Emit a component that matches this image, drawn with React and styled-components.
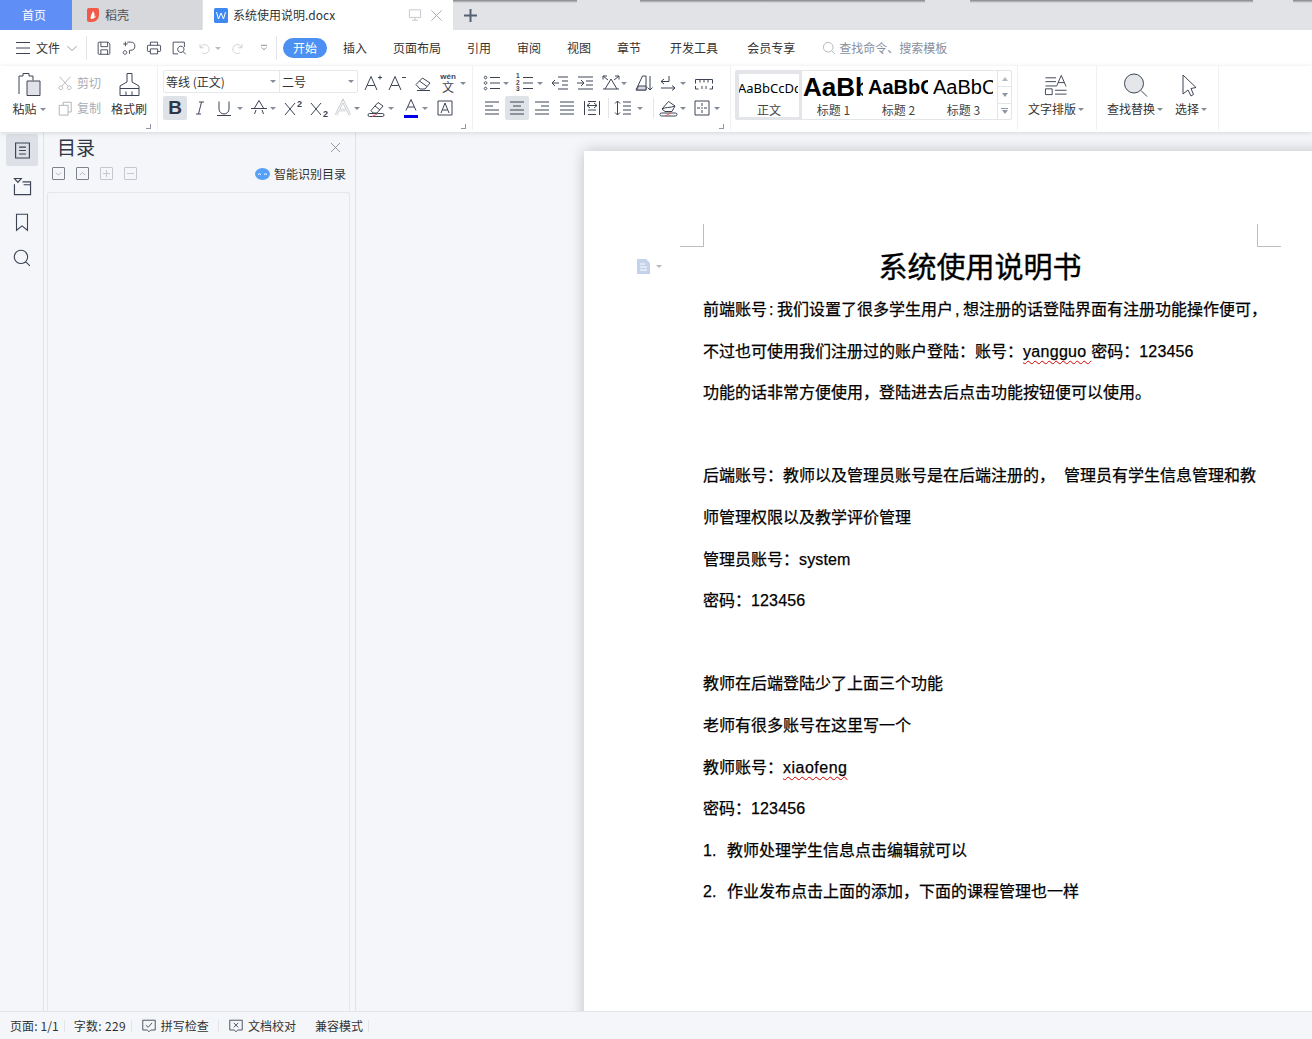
import React from "react";
import styled, { createGlobalStyle } from "styled-components";

const UI = `"Noto Sans CJK SC", "Liberation Sans", sans-serif`;
const INK = "#3c4454";

const Global = createGlobalStyle`
  html, body { margin: 0; padding: 0; height: 100%; overflow: hidden; background: #f4f6f9; }
  #root { height: 100%; }
  * { box-sizing: border-box; }
`;

const Shell = styled.div`
  height: 1039px; width: 1312px; display: flex; flex-direction: column; overflow: hidden;
  font: 12px/18px ${UI}; color: #333;
`;

/* ---------- icons ---------- */
const paths = {
  burger: <path d="M3 4.5h14M3 10h14M3 15.5h14" />,
  chev: <path d="M5 8l5 5 5-5" />,
  chevUp: <path d="M5 13l5-5 5 5" />,
  save: <path d="M4.5 3.5h10l2 2v10.5a1 1 0 0 1-1 1h-11a1 1 0 0 1-1-1v-11.5a1 1 0 0 1 1-1zM6.5 3.5v5h7.5v-5M6.5 17v-5h7.5v5" />,
  fmt: <path d="M3.5 5.5h5M6 3v5M8 3.5h4a4.5 4.5 0 0 1 0 9h-1.5M10.5 12.5v4M5.500 13a2 2 0 1 0 .1 0z" />,
  print: <path d="M6 7V3.5h8V7M3.5 7h13a.8.8 0 0 1 .8.8V13a.8.8 0 0 1-.8.8H14M6 13.8H3.5a.8.8 0 0 1-.8-.8V7.8a.8.8 0 0 1 .8-.8M6 11h8v5.5H6z" />,
  preview: <path d="M16 9V3.5H3.5v13H9M12 8a3.5 3.5 0 1 0 .1 0zM14.5 14l3 3" />,
  undo: <path d="M4 4v5h5M4.5 9a6 6 0 1 1 2 6.5" />,
  redo: <path d="M16 4v5h-5M15.5 9a6 6 0 1 0-2 6.5" />,
  more: <path d="M5 5.5h10M6 9l4 4 4-4" />,
  search: <path d="M9 3a6 6 0 1 0 .1 0zM13.2 13.2l4 4" />,
  paste: <><path d="M3 22V4h4V1.5h6V4h4v4.500" /><path d="M11 9h13v14.500H11z" fill="#e1e3e8" /></>,
  cut: <path d="M3 2l10 11M16 2L6 13M4.5 13a2.2 2.2 0 1 0 .1 0zM14.5 13a2.2 2.2 0 1 0 .1 0z" />,
  copy: <path d="M7 6V2.5h9v11h-3.5M2.5 6h10v11h-10z" />,
  brush: <><path d="M11 1.500h5v8.500l7 4v9.500H4V14l7-4zM4 16.500h19" /><path d="M10 19.500v4M16 19.500v4" /></>,
  aplus: <path d="M2 17L8 3.5 14 17M4.2 12.5h7.6M15 4.5h4M17 2.5v4" />,
  aminus: <path d="M2 17L8 3.5 14 17M4.2 12.5h7.6M15 4.5h4" />,
  eraser: <><path d="M3 11.5l6.5-6.5 7.5 5-5 6H7z" /><path d="M6.5 8l7.5 5.5" /><path d="M4 17.5h13" /></>,
  italic: <path d="M9 4h5M6 16h5M11.5 4l-3 12" />,
  under: <path d="M5 3.5V11a5 5 0 0 0 10 0V3.5M3 17.5h14" />,
  strikeA: <path d="M5.5 10L10 2.5 14.5 10M2 10.5h16M5.5 16l1.5-4M14.5 16l-1.5-4" />,
  sup: <path d="M3 5l10 12M13 5L3 17" />,
  glowA: <><path d="M3 17L10 3l7 14M6 12h8" stroke="#c4c7cd" strokeWidth="2.6" /><path d="M3 17L10 3l7 14M6 12h8" stroke="#fff" strokeWidth="1" /></>,
  pen: <><path d="M4 12.5l7-8 5 3.5-6 7H6z" /><path d="M8 8l5 4" /><path d="M2.5 15.5h13a1.5 1.5 0 0 1 0 3h-13a1.5 1.5 0 0 1 0-3z" /><path d="M5 18.5l6-3" stroke="#e25b5b" /></>,
  colorA: <path d="M5 12.5L10 1.5l5 11M6.8 9h6.4" />,
  boxA: <path d="M3 3h14v14H3zM6 15l4-10 4 10M7.4 12h5.2" />,
  bullets: <path d="M8 4.5h10M8 10h10M8 15.5h10M3.5 3.2a1.3 1.3 0 1 0 .1 0zM3.5 8.7a1.3 1.3 0 1 0 .1 0zM3.5 14.2a1.3 1.3 0 1 0 .1 0z" />,
  outdent: <path d="M8 4h10M12 8h6M12 12h6M8 16h10M9 10H2M5 7l-3 3 3 3" />,
  indent: <path d="M3 4h15M11 8h7M11 12h7M3 16h15M2 10h7M6 7l3 3-3 3" />,
  spread: <path d="M4 16l6-10 6 10M2 16h16M2 3l5 4M2 3h4M2 3v3.5M18 3l-5 4M18 3h-4M18 3v3.5" />,
  sortA: <><path d="M2 17L8.5 3h3.5v14z" /><path d="M2.5 17L4.5 13H12v4z" fill="#d4d7dc" /><path d="M16 3v14M13.5 14.5L16 17l2.5-2.5" /></>,
  para: <path d="M11 3v5.500H3M6 6L3 8.500l3 2.500M3 15h14M14 12.500l3 2.500-3 2.500" />,
  ruler: <path d="M1.5 6.5h17M1.5 6.5v4M6 6.5v3M10 6.5v3M14 6.5v3M18.5 6.5v4M1.5 13v3h3M8 13v3M12 13v3M15.5 16h3v-3" />,
  left: <path d="M3 4h14M3 8h8M3 12h14M3 16h14" />,
  center: <path d="M3 4h14M6 8h8M3 12h14M3 16h14" />,
  right: <path d="M3 4h14M9 8h8M3 12h14M3 16h14" />,
  just: <path d="M3 4h14M3 8h14M3 12h14M3 16h14" />,
  dist: <path d="M2.5 3v14M17.5 3v14M6 3.5h8M6 12h8M6 16.5h8M5 7.5h10M8 5l-3 2.5L8 10M12 5l3 2.5-3 2.5" />,
  spacing: <path d="M4.5 3v14M2 5.5L4.5 3 7 5.5M2 14.5L4.5 17 7 14.5M10 4h8M10 8h8M10 12h8M10 16h8" />,
  fill: <><path d="M3 11l6.5-7.5L16 8l-3 5.5H6z" /><path d="M3 11c3-2 8-1 13-3" /><path d="M2.5 15h14a1.5 1.5 0 0 1 0 3h-14a1.5 1.5 0 0 1 0-3z" /><path d="M6 18l6-3" stroke="#e25b5b" /></>,
  grid: <path d="M3 3h14v14H3zM10 5v3M10 9.5v1M10 12v3M5 10h3M9.5 10h1M12 10h3" />,
  typeset: <><path d="M1.5 5h11M1.5 9h11M1.5 13.5h11" /><path d="M13 14l5-11.5L23 14M14.8 10h6.4" /><path d="M1.5 16.5h7v6h-7zM11.5 18h12M11.5 22h12" /></>,
  bigsearch: <><circle cx="11" cy="10.5" r="9.5" fill="#e4e6ea" /><path d="M18 17.5l6 6" /></>,
  cursor: <path d="M4 2l13 12.5-5 1 2.5 6-2.5 1.5-3-6-5 4z" />,
  rOutline: <path d="M4 3.5h12v13H4zM7 7h6M7 10h6M7 13h6" />,
  rNav: <path d="M3 3h6l-3 3.5zM3 8v9h14V6h-7M11 8.5h6" />,
  rMark: <path d="M5 3h10v14.5l-5-4-5 4z" />,
  spell: <path d="M2 2.5h14v11H11l-2 2-2-2H2zM5.5 8l2.5 2.5L12.5 5.5" />,
  proof: <path d="M2 2.5h14v11H11l-2 2-2-2H2zM6.5 5.5l5 5M11.5 5.5l-5 5" />,
  monitor: <path d="M3 3.5h14v9.5H3zM10 13v3.5M6.5 16.5h7" />,
  x: <path d="M4 4l12 12M16 4L4 16" />,
};

const Svg = styled.svg`
  display: block; flex: none; overflow: visible;
  margin-left: ${(p) => p.$ml || 0}px;
  fill: none; stroke-linecap: butt; stroke-linejoin: miter;
`;

const Ico = ({ n, s = 20, vb = 20, c = INK, ml, sw = 1 }) => (
  <Svg $ml={ml} width={s} height={s} viewBox={`0 0 ${vb} ${vb}`} stroke={c} strokeWidth={sw}>
    {paths[n]}
  </Svg>
);

const Caret = styled.i`
  display: block; flex: none; width: 0; height: 0;
  margin-left: ${(p) => p.$ml || 0}px;
  border-left: 3px solid transparent; border-right: 3px solid transparent;
  border-top: 3px solid ${(p) => p.$c || "#868c97"};
`;

/* ---------- tab bar ---------- */
const strip = (x, w) => `linear-gradient(#808286, #e1e3e7) ${x}px 0 / ${w}px 3px no-repeat`;
const TabBar = styled.div`
  position: relative; height: 30px; flex: none; display: flex; background: #e1e3e7;
  &::after {
    content: ""; position: absolute; left: 0; right: 0; top: 0; height: 3px;
    background: ${strip(453, 124)}, ${strip(640, 285)}, ${strip(970, 283)}, ${strip(1293, 19)};
  }
`;
const HomeTab = styled.div`
  width: 72px; background: #5f8ff6; color: #fff; display: flex; align-items: center; justify-content: center;
  font-size: 12px; padding-right: 4px;
`;
const ShellTab = styled.div`
  width: 130px; margin-right: 1px; background: #d6d8dc; display: flex; align-items: center; padding-left: 15px; gap: 6px; color: #4a4f58;
`;
const ActiveTab = styled.div`
  width: 250px; background: #fff; display: flex; align-items: center; padding: 0 8px 0 11px; color: #30343c;
`;
const TabTitle = styled.span`
  margin-left: 5px; flex: 1;
`;
const AddTab = styled.div`
  margin-left: 11px; display: flex; align-items: center;
`;
const Badge = styled.svg`
  display: block; flex: none;
`;

/* ---------- menu row ---------- */
const MenuRow = styled.div`
  height: 36px; flex: none; background: #fff; display: flex; align-items: center; padding-left: 13px;
`;
const MenuLabel = styled.span`
  margin-left: ${(p) => p.$ml || 0}px; flex: none; line-height: 18px; color: #333;
`;
const VBar = styled.i`
  display: block; flex: none; width: 1px; height: ${(p) => p.$h || 24}px;
  margin-left: ${(p) => p.$ml || 0}px; background: ${(p) => p.$c || "#e3e5e9"};
`;
const StartPill = styled.span`
  flex: none; margin-left: 6px; width: 44px; height: 20px; border-radius: 10px; background: #4c90f3; color: #fff;
  display: flex; align-items: center; justify-content: center;
`;
const SearchHint = styled.span`
  margin-left: 2px; color: #878e9c;
`;

/* ---------- ribbon ---------- */
const Ribbon = styled.div`
  position: relative; z-index: 2; height: 66px; flex: none; background: #fff; display: flex;
  box-shadow: 0 1px 5px rgba(0, 0, 0, 0.13);
`;
const Group = styled.div`
  position: relative; flex: none; width: ${(p) => p.$w}px; padding-left: ${(p) => p.$pl || 0}px; margin-bottom: 2px;
  border-right: 1px solid #eff0f2; display: flex;
  flex-direction: ${(p) => (p.$col ? "column" : "row")};
  padding-top: ${(p) => (p.$col ? 5 : 0)}px;
`;
const Launcher = styled.i`
  position: absolute; right: 6px; bottom: 1px; width: 5px; height: 5px;
  border-right: 1px solid #8d97a8; border-bottom: 1px solid #8d97a8;
`;
const BigTool = styled.div`
  flex: none; display: flex; flex-direction: column; align-items: center; padding-top: 6px;
  width: ${(p) => p.$w}px; margin-left: ${(p) => p.$ml || 0}px;
`;
const BigIcon = styled.div`
  height: 26px; display: flex; align-items: center; justify-content: center;
`;
const BigLabel = styled.div`
  height: 22px; display: flex; align-items: center; gap: 2px; white-space: nowrap; color: #333;
`;
const SmallCol = styled.div`
  flex: none; width: 44px; margin-left: ${(p) => p.$ml}px; padding-top: 5px; display: flex; flex-direction: column; gap: 1px;
`;
const SmallTool = styled.div`
  height: 24px; display: flex; align-items: center; gap: 4px; color: #a9adb4;
`;
const Row = styled.div`
  height: 24px; display: flex; align-items: center; margin-bottom: 1px;
`;
const Combo = styled.div`
  display: flex; height: 23px; width: 195px; margin-bottom: 3px; border: 1px solid #e6e7ea; border-radius: 2px; flex: none;
`;
const ComboPart = styled.div`
  width: ${(p) => p.$w}px; display: flex; align-items: center; justify-content: space-between; padding: 0 3px 0 2px;
  & + & { border-left: 1px solid #e6e7ea; }
`;
const Pressed = styled.div`
  flex: none; width: 24px; height: 24px; border-radius: 2px; display: flex; align-items: center; justify-content: center;
  margin-left: ${(p) => p.$ml || 0}px; background: #dfe2e6;
`;
const BoldMark = styled.span`
  font: 700 19px/24px "Liberation Sans", sans-serif; color: #2f3647;
`;
const ScriptWrap = styled.span`
  position: relative; flex: none; display: block; width: 20px; height: 20px; margin-left: ${(p) => p.$ml}px;
`;
const ScriptNum = styled.b`
  position: absolute; right: 0; top: ${(p) => (p.$sub ? 11 : 1)}px; font: 700 9px/10px "Liberation Sans", sans-serif; color: ${INK};
`;
const WenWrap = styled.span`
  flex: none; width: 22px; height: 20px; margin-left: ${(p) => p.$ml}px; display: flex; flex-direction: column; align-items: center; color: ${INK};
`;
const WenTop = styled.span`
  font: 700 8px/8px "Liberation Sans", sans-serif;
`;
const WenBottom = styled.span`
  font-size: 12px; line-height: 12px;
`;
const NumList = styled.span`
  position: relative; flex: none; width: 20px; height: 20px; display: block; margin-left: ${(p) => p.$ml}px;
`;
const NumMarks = styled.span`
  position: absolute; left: 1px; top: 0; width: 6px; font: 700 6.5px/6.6px "Liberation Sans", sans-serif; color: ${INK};
`;
const ColorBar = styled.i`
  position: absolute; left: 3px; right: 3px; bottom: 0; height: 3px; background: #0000e6;
`;

const Gallery = styled.div`
  flex: none; width: 277px; height: 50px; margin: 4px 5px 0 4px; border: 1px solid #e3e5e9; border-radius: 2px; display: flex;
`;
const StyleItem = styled.div`
  flex: none; width: ${(p) => (p.$on ? 66 : 65)}px; height: 100%; overflow: hidden; display: flex; flex-direction: column;
  ${(p) => p.$on && "border: 3px solid #e3e5e9; border-bottom-width: 2px;"}
`;
const Sample = styled.div`
  flex: none; width: 60px; margin-left: ${(p) => (p.$on ? -1 : 1)}px; overflow: hidden; white-space: nowrap;
  height: ${(p) => (p.$on ? 27 : 30)}px; line-height: ${(p) => (p.$on ? 29 : 32)}px;
  color: #000;
  font-family: ${(p) => (p.$lvl === 0 ? `"Noto Sans"` : `"Liberation Sans"`)}, sans-serif;
  font-size: ${(p) => [13, 26, 20, 20][p.$lvl]}px;
  font-weight: ${(p) => (p.$lvl === 1 || p.$lvl === 2 ? 700 : 400)};
`;
const StyleName = styled.div`
  text-align: center; line-height: 16px; margin-top: 1px; padding-right: ${(p) => (p.$on ? 0 : 2)}px; color: #444;
`;
const Scroller = styled.div`
  flex: 1; border-left: 1px solid #e3e5e9; display: flex; flex-direction: column;
`;
const ScrollCell = styled.div`
  flex: 1; display: flex; flex-direction: column; gap: 1px; align-items: center; justify-content: center;
  & + & { border-top: 1px solid #e3e5e9; }
`;
const Tri = styled.i`
  display: block; width: 0; height: 0; border-left: 3.5px solid transparent; border-right: 3.5px solid transparent;
  ${(p) => (p.$up ? "border-bottom: 4px solid #b3b8c1;" : "border-top: 4px solid #8f95a0;")}
`;
const Dash = styled.i`
  display: block; width: 7px; height: 1px; background: #8f95a0;
`;
const ToolsGroup = styled.div`
  flex: none; margin-bottom: 2px; display: flex; padding-left: ${(p) => p.$pl}px; width: ${(p) => p.$w}px;
  border-left: ${(p) => (p.$first ? "1px solid #eff0f2" : "none")}; border-right: 1px solid #eff0f2;
`;

/* ---------- body ---------- */
const Body = styled.div`
  flex: 1; min-height: 0; display: flex; background: #f4f6f9;
`;
const Rail = styled.div`
  width: 44px; flex: none; border-right: 1px solid #e0e2e6; padding: 2px 0 0 6px; display: flex; flex-direction: column; gap: 4px;
`;
const RailBtn = styled.div`
  width: 32px; height: 32px; border-radius: 2px; display: flex; align-items: center; justify-content: center;
  background: ${(p) => (p.$on ? "#dde0e6" : "transparent")};
`;
const Panel = styled.div`
  width: 312px; flex: none; border-right: 1px solid #e0e2e6; display: flex; flex-direction: column;
`;
const PanelHead = styled.div`
  height: 32px; display: flex; align-items: center; padding: 0 12px 2px 13px; justify-content: space-between;
`;
const PanelTitle = styled.div`
  font-size: 19px; line-height: 28px; color: #2f3542;
`;
const PanelTools = styled.div`
  height: 20px; display: flex; align-items: center; padding: 0 9px 0 8px;
`;
const MiniBtn = styled.div`
  flex: none; width: 13px; height: 13px; margin: 0 11px 1px 0; border: 1px solid ${(p) => (p.$off ? "#c4c7cd" : "#7d828c")};
  border-radius: 1px; display: flex; align-items: center; justify-content: center;
`;
const AiLink = styled.div`
  margin-left: auto; display: flex; align-items: center; gap: 4px; color: #333;
`;
const TocBox = styled.div`
  flex: 1; margin: 8px 5px 0 3px; border: 1px solid #e4e6ea; border-bottom: none; border-radius: 3px 3px 0 0;
`;
const Canvas = styled.div`
  flex: 1; min-width: 0; overflow: hidden; padding: 19px 0 0 228px;
`;
const Page = styled.div`
  position: relative; width: 794px; height: 1123px; background: #fff; padding: 96px 0 0 119px;
  box-shadow: 0 0 14px rgba(0, 0, 0, 0.22);
`;
const Crop = styled.i`
  position: absolute; top: 73px; width: 24px; height: 23px; border-bottom: 1px solid #bdbdbd;
  ${(p) => (p.$right ? "left: 673px; border-left: 1px solid #bdbdbd;" : "left: 96px; border-right: 1px solid #bdbdbd;")}
`;
const DocMark = styled.div`
  position: absolute; left: 53px; top: 108px; display: flex; align-items: center; gap: 6px;
`;
const Doc = styled.div`
  width: 560px; font: 16px/41.6px "Liberation Sans", "Noto Sans CJK SC", sans-serif; color: #000;
  -webkit-text-stroke: 0.25px #000;
`;
const DocTitle = styled.h1`
  margin: 0; width: 554px; height: 42px; text-align: center; font: 400 29px/42px "Liberation Sans", "Noto Sans CJK SC", sans-serif;
  -webkit-text-stroke: 0.4px #000;
`;
const Line = styled.div`
  min-height: 41.6px; white-space: pre;
`;
const Typo = styled.span`
  letter-spacing: ${(p) => p.$ls}px;
  text-decoration: underline wavy #d40000 1px; text-underline-offset: 3px; text-decoration-skip-ink: none;
`;
const Latin = styled.span`
  letter-spacing: ${(p) => p.$ls || 0.15}px;
`;
const Tight = styled.span`
  display: inline-block; width: 10px; padding-left: 2px; line-height: 1;
`;
const ListRow = styled(Line)`
  display: flex;
`;
const ListNum = styled.span`
  width: 24px; flex: none;
`;

/* ---------- status ---------- */
const Status = styled.div`
  height: 28px; flex: none; background: #f4f6f9; border-top: 1px solid #e3e5e9; display: flex; align-items: center; color: #333;
`;
const Stat = styled.span`
  flex: none; margin-left: ${(p) => p.$ml}px; display: flex; align-items: center; gap: 4px; white-space: nowrap; letter-spacing: ${(p) => p.$ls || 0}px;
`;

export default function App() {
  return (
    <Shell>
      <Global />
      <TabBar>
        <HomeTab>首页</HomeTab>
        <ShellTab>
          <Badge width="12" height="14" viewBox="0 0 12 14">
            <path d="M2 0h8a2 2 0 0 1 2 2v5a7 7 0 0 1-7 7H2a2 2 0 0 1-2-2V2a2 2 0 0 1 2-2z" fill="#f05a47" />
            <path d="M4 11c-1-3 1-5 2-8 1 2 2.500 3 1 5.500 1 0 1.500-.5 2-1-.5 2-2 3.500-5 3.500z" fill="#fff" />
          </Badge>
          稻壳
        </ShellTab>
        <ActiveTab>
          <Badge width="14" height="15" viewBox="0 0 14 15">
            <rect width="14" height="15" rx="1.500" fill="#3d88f2" />
            <path d="M2.500 4l2 7 2.500-6 2.500 6 2-7" fill="none" stroke="#fff" />
          </Badge>
          <TabTitle>系统使用说明.docx</TabTitle>
          <Ico n="monitor" s={16} c="#b6bac2" />
          <Ico n="x" s={17} c="#9ba0aa" ml={5} />
        </ActiveTab>
        <AddTab>
          <Svg width="13" height="13" viewBox="0 0 13 13" stroke="#566073" strokeWidth="2">
            <path d="M6.500 0v13M0 6.500h13" />
          </Svg>
        </AddTab>
      </TabBar>

      <MenuRow>
        <Ico n="burger" s={20} />
        <MenuLabel $ml={3}>文件</MenuLabel>
        <Ico n="chev" s={18} ml={3} c="#8a909b" />
        <VBar $ml={5} />
        <Ico n="save" s={18} ml={8} />
        <Ico n="fmt" s={18} ml={7} />
        <Ico n="print" s={18} ml={7} />
        <Ico n="preview" s={18} ml={7} />
        <Ico n="undo" s={15} ml={9} c="#c2c5cb" />
        <Caret $ml={3} $c="#b9bcc3" />
        <Ico n="redo" s={15} ml={9} c="#c2c5cb" />
        <Ico n="more" s={12} ml={13} />
        <VBar $ml={6} />
        <StartPill>开始</StartPill>
        <MenuLabel $ml={16}>插入</MenuLabel>
        <MenuLabel $ml={26}>页面布局</MenuLabel>
        <MenuLabel $ml={26}>引用</MenuLabel>
        <MenuLabel $ml={26}>审阅</MenuLabel>
        <MenuLabel $ml={26}>视图</MenuLabel>
        <MenuLabel $ml={26}>章节</MenuLabel>
        <MenuLabel $ml={29}>开发工具</MenuLabel>
        <MenuLabel $ml={29}>会员专享</MenuLabel>
        <Ico n="search" s={16} ml={26} c="#a0a7b4" />
        <SearchHint>查找命令、搜索模板</SearchHint>
      </MenuRow>

      <Ribbon>
        <Group $w={158}>
          <BigTool $w={34} $ml={12}>
            <BigIcon><Ico n="paste" s={26} vb={26} /></BigIcon>
            <BigLabel>粘贴<Caret $ml={1} /></BigLabel>
          </BigTool>
          <SmallCol $ml={11}>
            <SmallTool><Ico n="cut" s={16} vb={19} c="#a9adb4" />剪切</SmallTool>
            <SmallTool><Ico n="copy" s={16} vb={18} c="#a9adb4" />复制</SmallTool>
          </SmallCol>
          <BigTool $w={36} $ml={10}>
            <BigIcon><Ico n="brush" s={26} vb={26} /></BigIcon>
            <BigLabel>格式刷</BigLabel>
          </BigTool>
          <Launcher />
        </Group>

        <Group $w={315} $pl={5} $col>
          <Row>
            <Combo>
              <ComboPart $w={115}>等线 (正文)<Caret /></ComboPart>
              <ComboPart $w={78}>二号<Caret /></ComboPart>
            </Combo>
            <Ico n="aplus" ml={5} />
            <Ico n="aminus" ml={4} />
            <Ico n="eraser" ml={6} />
            <WenWrap $ml={4}><WenTop>wén</WenTop><WenBottom>文</WenBottom></WenWrap>
            <Caret $ml={1} />
          </Row>
          <Row>
            <Pressed><BoldMark>B</BoldMark></Pressed>
            <Ico n="italic" ml={3} />
            <Ico n="under" ml={4} />
            <Caret $ml={3} />
            <Ico n="strikeA" ml={6} />
            <Caret $ml={1} />
            <ScriptWrap $ml={6}><Ico n="sup" /><ScriptNum>2</ScriptNum></ScriptWrap>
            <ScriptWrap $ml={6}><Ico n="sup" /><ScriptNum $sub>2</ScriptNum></ScriptWrap>
            <Ico n="glowA" ml={5} />
            <Caret $ml={1} />
            <Ico n="pen" ml={7} />
            <Caret $ml={1} />
            <ScriptWrap $ml={7}><Ico n="colorA" /><ColorBar /></ScriptWrap>
            <Caret $ml={1} />
            <Ico n="boxA" ml={7} />
          </Row>
          <Launcher />
        </Group>

        <Group $w={258} $pl={9} $col>
          <Row>
            <Ico n="bullets" />
            <Caret $ml={1} />
            <NumList $ml={6}>
              <NumMarks>1 2 3</NumMarks>
              <Svg width="20" height="20" viewBox="0 0 20 20" stroke={INK}><path d="M8 4.500h10M8 10h10M8 15.500h10" /></Svg>
            </NumList>
            <Caret $ml={2} />
            <Ico n="outdent" ml={7} />
            <Ico n="indent" ml={5} />
            <Ico n="spread" ml={6} />
            <Caret />
            <Ico n="sortA" ml={7} />
            <Ico n="para" ml={4} />
            <Caret $ml={2} />
            <Ico n="ruler" ml={8} />
          </Row>
          <Row>
            <Ico n="left" />
            <Pressed $ml={3}><Ico n="center" /></Pressed>
            <Ico n="right" ml={3} />
            <Ico n="just" ml={5} />
            <Ico n="dist" ml={5} />
            <VBar $ml={6} $h={20} />
            <Ico n="spacing" ml={4} />
            <Caret $ml={4} />
            <VBar $ml={10} $h={20} />
            <Ico n="fill" ml={5} />
            <Caret $ml={1} />
            <Ico n="grid" ml={6} />
            <Caret $ml={2} />
          </Row>
          <Launcher />
        </Group>

        <Gallery>
          <StyleItem $on>
            <Sample $on $lvl={0}>AaBbCcDd</Sample>
            <StyleName $on>正文</StyleName>
          </StyleItem>
          <StyleItem>
            <Sample $lvl={1}>AaBbC</Sample>
            <StyleName>标题 1</StyleName>
          </StyleItem>
          <StyleItem>
            <Sample $lvl={2}>AaBbCc</Sample>
            <StyleName>标题 2</StyleName>
          </StyleItem>
          <StyleItem>
            <Sample $lvl={3}>AaBbCc</Sample>
            <StyleName>标题 3</StyleName>
          </StyleItem>
          <Scroller>
            <ScrollCell><Tri $up /></ScrollCell>
            <ScrollCell><Tri /></ScrollCell>
            <ScrollCell><Dash /><Tri /></ScrollCell>
          </Scroller>
        </Gallery>

        <ToolsGroup $first $w={80} $pl={10}>
          <BigTool $w={56}>
            <BigIcon><Ico n="typeset" s={24} vb={25} /></BigIcon>
            <BigLabel>文字排版<Caret /></BigLabel>
          </BigTool>
        </ToolsGroup>
        <ToolsGroup $w={122} $pl={10}>
          <BigTool $w={56}>
            <BigIcon><Ico n="bigsearch" s={25} vb={25} /></BigIcon>
            <BigLabel>查找替换<Caret /></BigLabel>
          </BigTool>
          <BigTool $w={32} $ml={12}>
            <BigIcon><Ico n="cursor" s={24} vb={24} /></BigIcon>
            <BigLabel>选择<Caret /></BigLabel>
          </BigTool>
        </ToolsGroup>
      </Ribbon>

      <Body>
        <Rail>
          <RailBtn $on><Ico n="rOutline" s={23} /></RailBtn>
          <RailBtn><Ico n="rNav" s={23} /></RailBtn>
          <RailBtn><Ico n="rMark" s={22} /></RailBtn>
          <RailBtn><Ico n="search" s={22} /></RailBtn>
        </Rail>
        <Panel>
          <PanelHead>
            <PanelTitle>目录</PanelTitle>
            <Ico n="x" s={15} c="#747a86" />
          </PanelHead>
          <PanelTools>
            <MiniBtn><Ico n="chev" s={11} c="#7d828c" /></MiniBtn>
            <MiniBtn><Ico n="chevUp" s={11} c="#7d828c" /></MiniBtn>
            <MiniBtn $off><Svg width="9" height="9" viewBox="0 0 9 9" stroke="#c4c7cd"><path d="M1 4.500h7M4.500 1v7" /></Svg></MiniBtn>
            <MiniBtn $off><Svg width="9" height="9" viewBox="0 0 9 9" stroke="#c4c7cd"><path d="M1 4.500h7" /></Svg></MiniBtn>
            <AiLink>
              <Badge width="15" height="12" viewBox="0 0 15 12">
                <ellipse cx="7.500" cy="6" rx="7.500" ry="6" fill="#56a0f5" />
                <path d="M3 6.500q1.500-1.500 3 0M9 6.500q1.500-1.500 3 0" stroke="#fff" fill="none" />
              </Badge>
              智能识别目录
            </AiLink>
          </PanelTools>
          <TocBox />
        </Panel>
        <Canvas>
          <Page>
            <Crop />
            <Crop $right />
            <DocMark>
              <Badge width="13" height="15" viewBox="0 0 13 15">
                <path d="M0 0h9l4 4v11H0z" fill="#c4d3ec" />
                <path d="M3 5h5M3 8h7M3 11h7" stroke="#fff" />
              </Badge>
              <Caret $c="#b4b8c0" />
            </DocMark>
            <Doc>
              <DocTitle>系统使用说明书</DocTitle>
              <Line>前端账号<Tight>:</Tight>我们设置了很多学生用户<Tight>,</Tight>想注册的话登陆界面有注册功能操作便可，</Line>
              <Line>不过也可使用我们注册过的账户登陆：账号：<Typo $ls={0.3}>yangguo </Typo>密码：<Latin>123456</Latin></Line>
              <Line>功能的话非常方便使用，登陆进去后点击功能按钮便可以使用。</Line>
              <Line />
              <Line>后端账号：教师以及管理员账号是在后端注册的，  管理员有学生信息管理和教</Line>
              <Line>师管理权限以及教学评价管理</Line>
              <Line>管理员账号：<Latin>system</Latin></Line>
              <Line>密码：<Latin>123456</Latin></Line>
              <Line />
              <Line>教师在后端登陆少了上面三个功能</Line>
              <Line>老师有很多账号在这里写一个</Line>
              <Line>教师账号：<Typo $ls={0.5}>xiaofeng</Typo></Line>
              <Line>密码：<Latin>123456</Latin></Line>
              <ListRow><ListNum>1.</ListNum>教师处理学生信息点击编辑就可以</ListRow>
              <ListRow><ListNum>2.</ListNum>作业发布点击上面的添加，下面的课程管理也一样</ListRow>
            </Doc>
          </Page>
        </Canvas>
      </Body>

      <Status>
        <Stat $ml={10} $ls={0.1}>页面: 1/1</Stat>
        <VBar $ml={5} $h={12} />
        <Stat $ml={9} $ls={0.3}>字数: 229</Stat>
        <VBar $ml={5} $h={12} />
        <Stat $ml={9}><Ico n="spell" s={16} vb={18} />拼写检查</Stat>
        <VBar $ml={9} $h={12} />
        <Stat $ml={9}><Ico n="proof" s={16} vb={18} />文档校对</Stat>
        <Stat $ml={19}>兼容模式</Stat>
        <VBar $ml={5} $h={12} />
      </Status>
    </Shell>
  );
}
